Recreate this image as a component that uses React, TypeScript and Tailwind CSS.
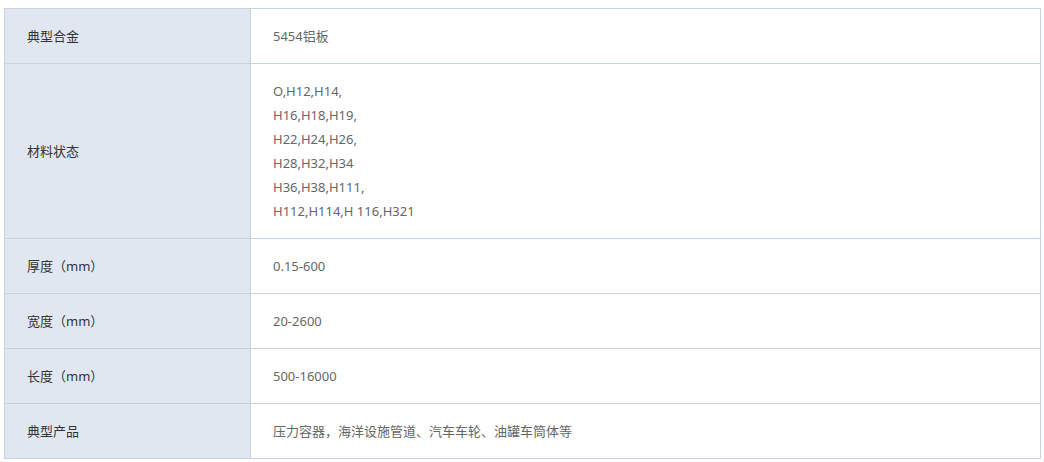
const rows: { label: string; value: string[] }[] = [
  { label: '典型合金', value: ['5454铝板'] },
  {
    label: '材料状态',
    value: [
      'O,H12,H14,',
      'H16,H18,H19,',
      'H22,H24,H26,',
      'H28,H32,H34',
      'H36,H38,H111,',
      'H112,H114,H 116,H321',
    ],
  },
  { label: '厚度（mm）', value: ['0.15-600'] },
  { label: '宽度（mm）', value: ['20-2600'] },
  { label: '长度（mm）', value: ['500-16000'] },
  { label: '典型产品', value: ['压力容器，海洋设施管道、汽车车轮、油罐车筒体等'] },
]

export default function App() {
  return (
    <div className="w-[1044px] h-[462px] bg-white pt-[8px] pl-[4px]">
      <table
        className="w-[1037px] border-collapse text-[13px] leading-[24px]"
        style={{ fontFamily: '"Microsoft YaHei", "Noto Sans", "Noto Sans CJK SC", sans-serif' }}
      >
        <tbody>
          {rows.map((r) => (
            <tr key={r.label}>
              <td className="w-[246px] border border-[#c9d3e0] bg-[#e1e7f1] px-[22px] py-[15px] text-[#333333] align-middle">
                {r.label}
              </td>
              <td className="border border-[#c9d3e0] px-[22px] py-[15px] text-[#666666] align-middle">
                {r.value.map((v) => (
                  <div key={v}>{v}</div>
                ))}
              </td>
            </tr>
          ))}
        </tbody>
      </table>
    </div>
  )
}
